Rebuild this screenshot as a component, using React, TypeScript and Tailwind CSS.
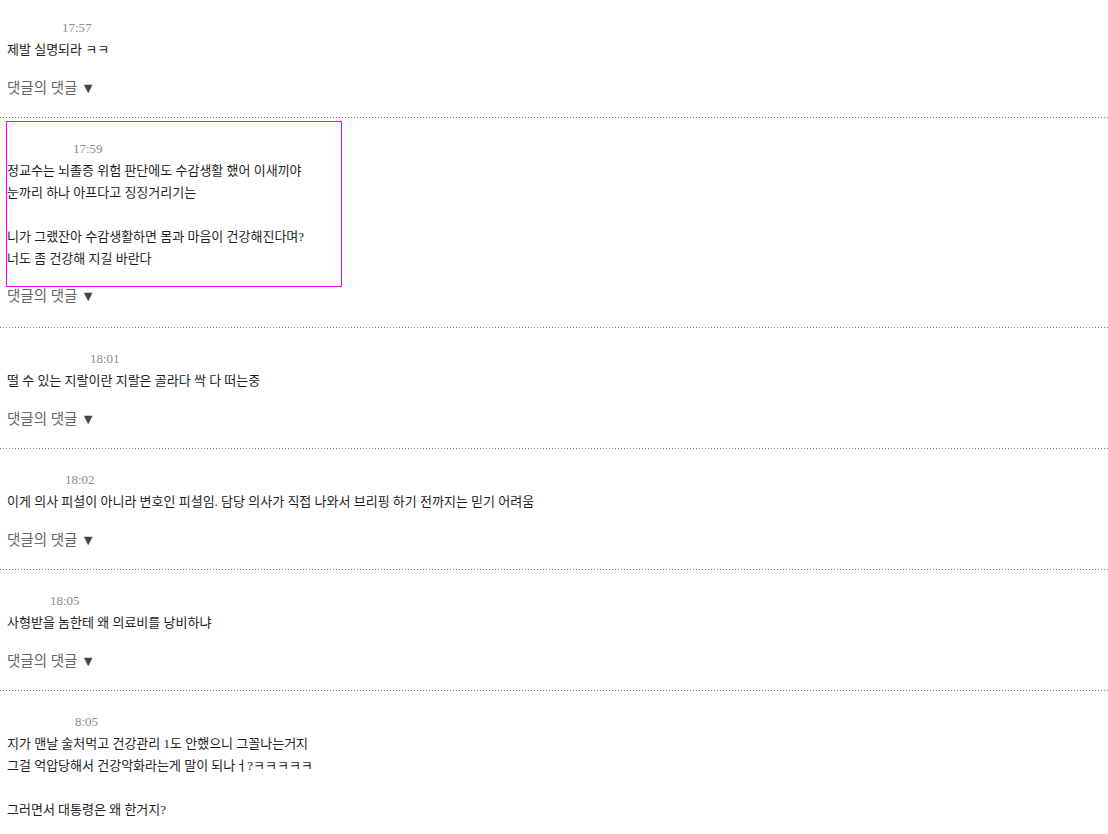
import React from "react";

interface Comment {
  time: string;
  offset: string; // left margin of the time stamp
  lines: string[];
  highlighted?: boolean;
}

const comments: Comment[] = [
  { time: "17:57", offset: "ml-[55px]", lines: ["제발 실명되라 ㅋㅋ"] },
  {
    time: "17:59",
    offset: "ml-[66px]",
    highlighted: true,
    lines: [
      "정교수는 뇌졸증 위험 판단에도 수감생활 했어 이새끼야",
      "눈까리 하나 아프다고 징징거리기는",
      "",
      "니가 그랬잔아 수감생활하면 몸과 마음이 건강해진다며?",
      "너도 좀 건강해 지길 바란다",
    ],
  },
  { time: "18:01", offset: "ml-[83px]", lines: ["떨 수 있는 지랄이란 지랄은 골라다 싹 다 떠는중"] },
  {
    time: "18:02",
    offset: "ml-[58px]",
    lines: ["이게 의사 피셜이 아니라 변호인 피셜임. 담당 의사가 직접 나와서 브리핑 하기 전까지는 믿기 어려움"],
  },
  { time: "18:05", offset: "ml-[43px]", lines: ["사형받을 놈한테 왜 의료비를 낭비하냐"] },
  {
    time: "8:05",
    offset: "ml-[68px]",
    lines: [
      "지가 맨날 술처먹고 건강관리 1도 안했으니 그꼴나는거지",
      "그걸 억압당해서 건강악화라는게 말이 되나ㅓ?ㅋㅋㅋㅋㅋ",
      "",
      "그러면서 대통령은 왜 한거지?",
    ],
  },
];

// one comment: time stamp, body lines, then the reply toggle
function CommentItem({ comment, first }: { comment: Comment; first: boolean }) {
  return (
    <div>
      {!first && (
        <div className="h-px w-full bg-[linear-gradient(to_right,#777_1px,transparent_1px)] bg-[length:3px_1px] bg-repeat-x" />
      )}
      <div
        className={`px-[7px] ${first ? "pt-[1px]" : "pt-[4px]"} ${
          comment.highlighted ? "pb-[21px]" : "pb-[19px]"
        }`}
      >
        <div
          className={
            comment.highlighted
              ? "w-[334px] pt-[16px] pb-[16px] shadow-[0_0_0_1px_#ff00ff]"
              : "pt-[16px] pb-[17px]"
          }
        >
          <div className={`${comment.offset} text-[13px] leading-[22px] text-[#8c8c8c]`}>
            {comment.time}
          </div>
          {comment.lines.map((line, i) => (
            <div key={i} className="h-[22px] whitespace-pre text-[13px] leading-[22px] text-[#1e1e1e]">
              {line}
            </div>
          ))}
        </div>
        <button className="block cursor-pointer text-[14.5px] leading-[20px] text-[#666]">
          댓글의 댓글 <span className="text-[#444]">▼</span>
        </button>
      </div>
    </div>
  );
}

export default function App() {
  return (
    <div className="min-h-screen w-full bg-white font-['Liberation_Serif','Noto_Sans_CJK_KR',serif]">
      {comments.map((c, i) => (
        <CommentItem key={i} comment={c} first={i === 0} />
      ))}
    </div>
  );
}
